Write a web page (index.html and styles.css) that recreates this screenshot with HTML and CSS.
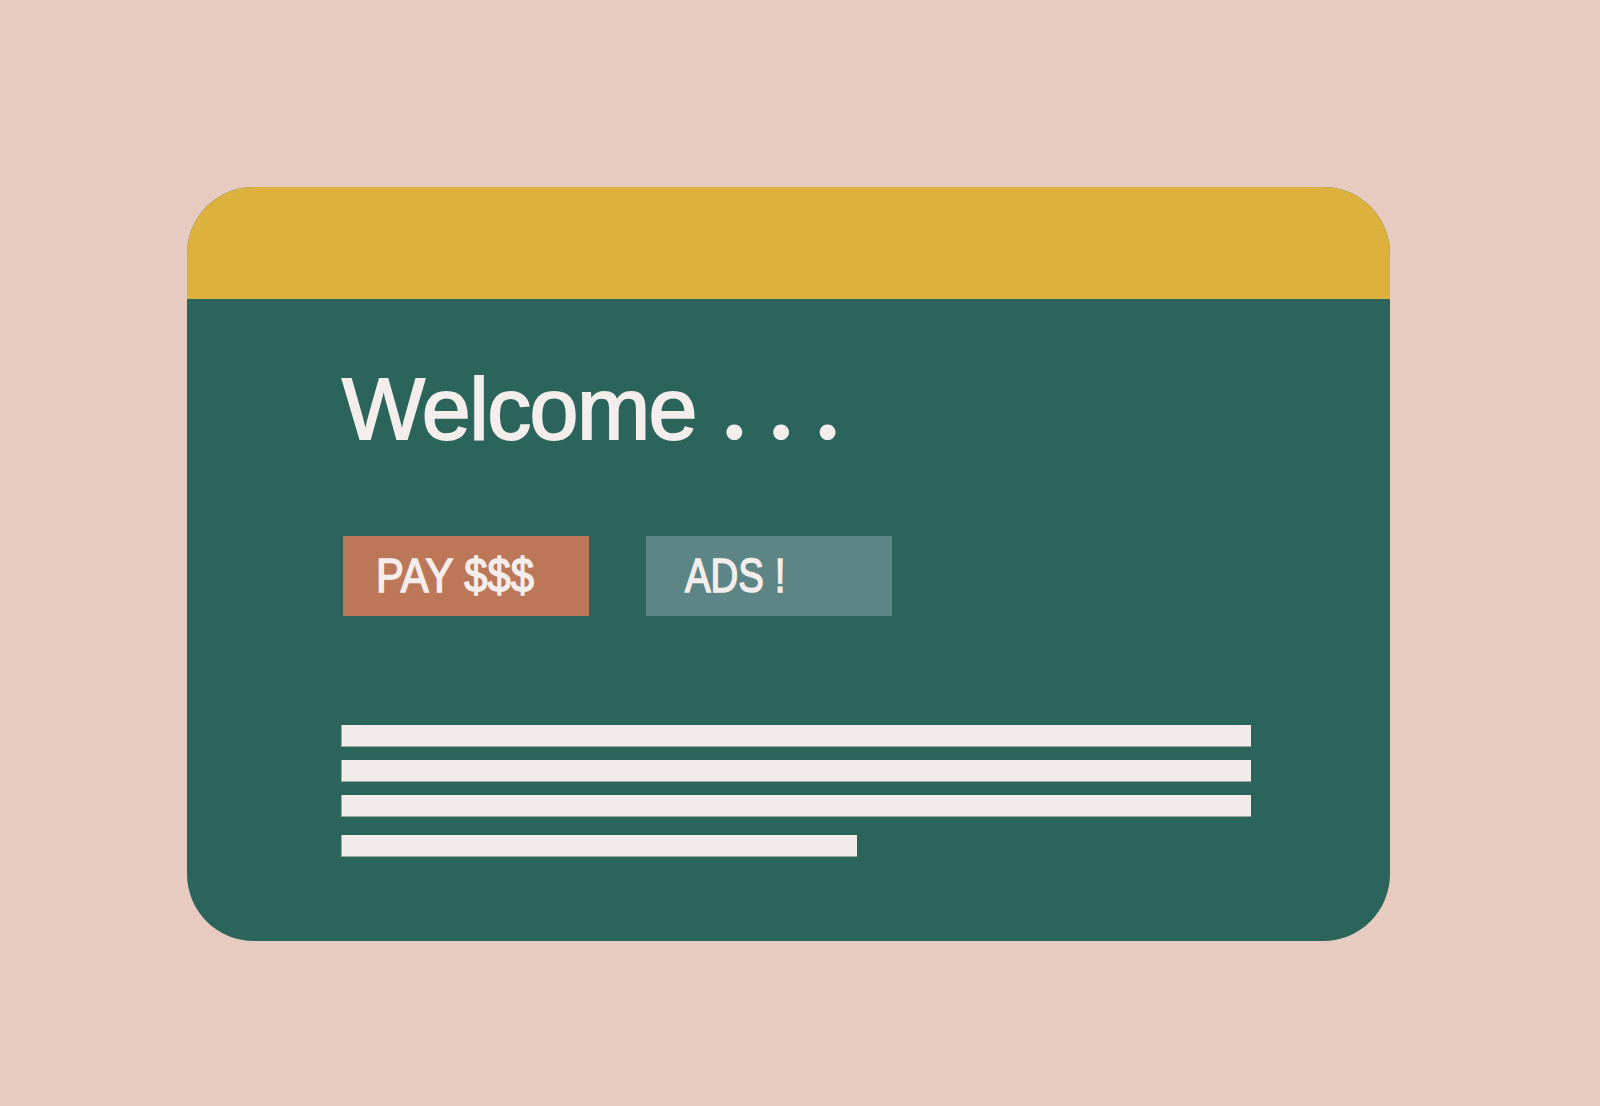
FILE: index.html
```html
<!DOCTYPE html>
<html>
<head>
<meta charset="utf-8">
<link rel="stylesheet" href="styles.css">
</head>
<body>
<div class="card">
  <div class="card-header"></div>
  <div class="card-body">
    <h1 class="title">Welcome<span class="dot">.</span><span class="dot">.</span><span class="dot">.</span></h1>
    <div class="buttons">
      <div class="btn btn-pay"><span class="btn-label">PAY $$$</span></div>
      <div class="btn btn-ads"><span class="btn-label">ADS !</span></div>
    </div>
    <div class="lines">
      <div class="line"></div>
      <div class="line"></div>
      <div class="line"></div>
      <div class="line line-short"></div>
    </div>
  </div>
</div>
</body>
</html>
```

FILE: styles.css
```css
html, body {
  margin: 0;
  padding: 0;
}
body {
  background: #e7cbc0;
  width: 1600px;
  height: 1106px;
  overflow: hidden;
  font-family: "Liberation Sans", Arial, sans-serif;
}
.card {
  margin: 187px 0 0 187px;
  width: 1203px;
  height: 754px;
  border-radius: 67px;
  overflow: hidden;
  background: #2b645a;
  display: flex;
  flex-direction: column;
}
.card-header {
  height: 112px;
  background: #dcb13e;
  flex: none;
}
.card-body {
  display: flex;
  flex-direction: column;
  padding: 65px 0 0 155px;
}
.title {
  margin: 0;
  height: 89px;
  font-size: 88px;
  line-height: 89px;
  font-weight: normal;
  color: #f3eeeb;
  letter-spacing: -1.6px;
  -webkit-text-stroke: 1.8px #f3eeeb;
}
.dot {
  display: inline;
  font-family: Lato, "Liberation Sans", sans-serif;
  font-weight: bold;
  font-size: 104px;
  line-height: 0;
  letter-spacing: 0;
  -webkit-text-stroke: 0;
  margin-left: 22px;
}
.title .dot:nth-of-type(1) {
  margin-left: 26px;
}
.buttons {
  display: flex;
  gap: 57px;
  margin-top: 83px;
  margin-left: 1px;
}
.btn {
  width: 246px;
  height: 80px;
  display: flex;
  align-items: center;
  box-sizing: border-box;
  color: #f3eeeb;
}
.btn-label {
  display: inline-block;
  font-size: 48px;
  line-height: 1;
  transform: scaleX(0.87);
  transform-origin: left center;
  -webkit-text-stroke: 1.5px #f3eeeb;
}
.btn-pay {
  background: #bc7758;
  padding-left: 33px;
}
.btn-ads {
  background: #5e8585;
  padding-left: 39px;
}
.btn-ads .btn-label {
  transform: scaleX(0.8);
}
.lines {
  display: flex;
  flex-direction: column;
  margin-top: 109px;
  margin-left: -1px;
}
.line {
  width: 910px;
  height: 22px;
  background: #f1ece9;
  box-shadow: inset 1px -1px 0 #9aa7a2;
  margin-bottom: 13px;
}
.line:nth-child(3) {
  margin-bottom: 18px;
}
.line-short {
  width: 516px;
}
```
